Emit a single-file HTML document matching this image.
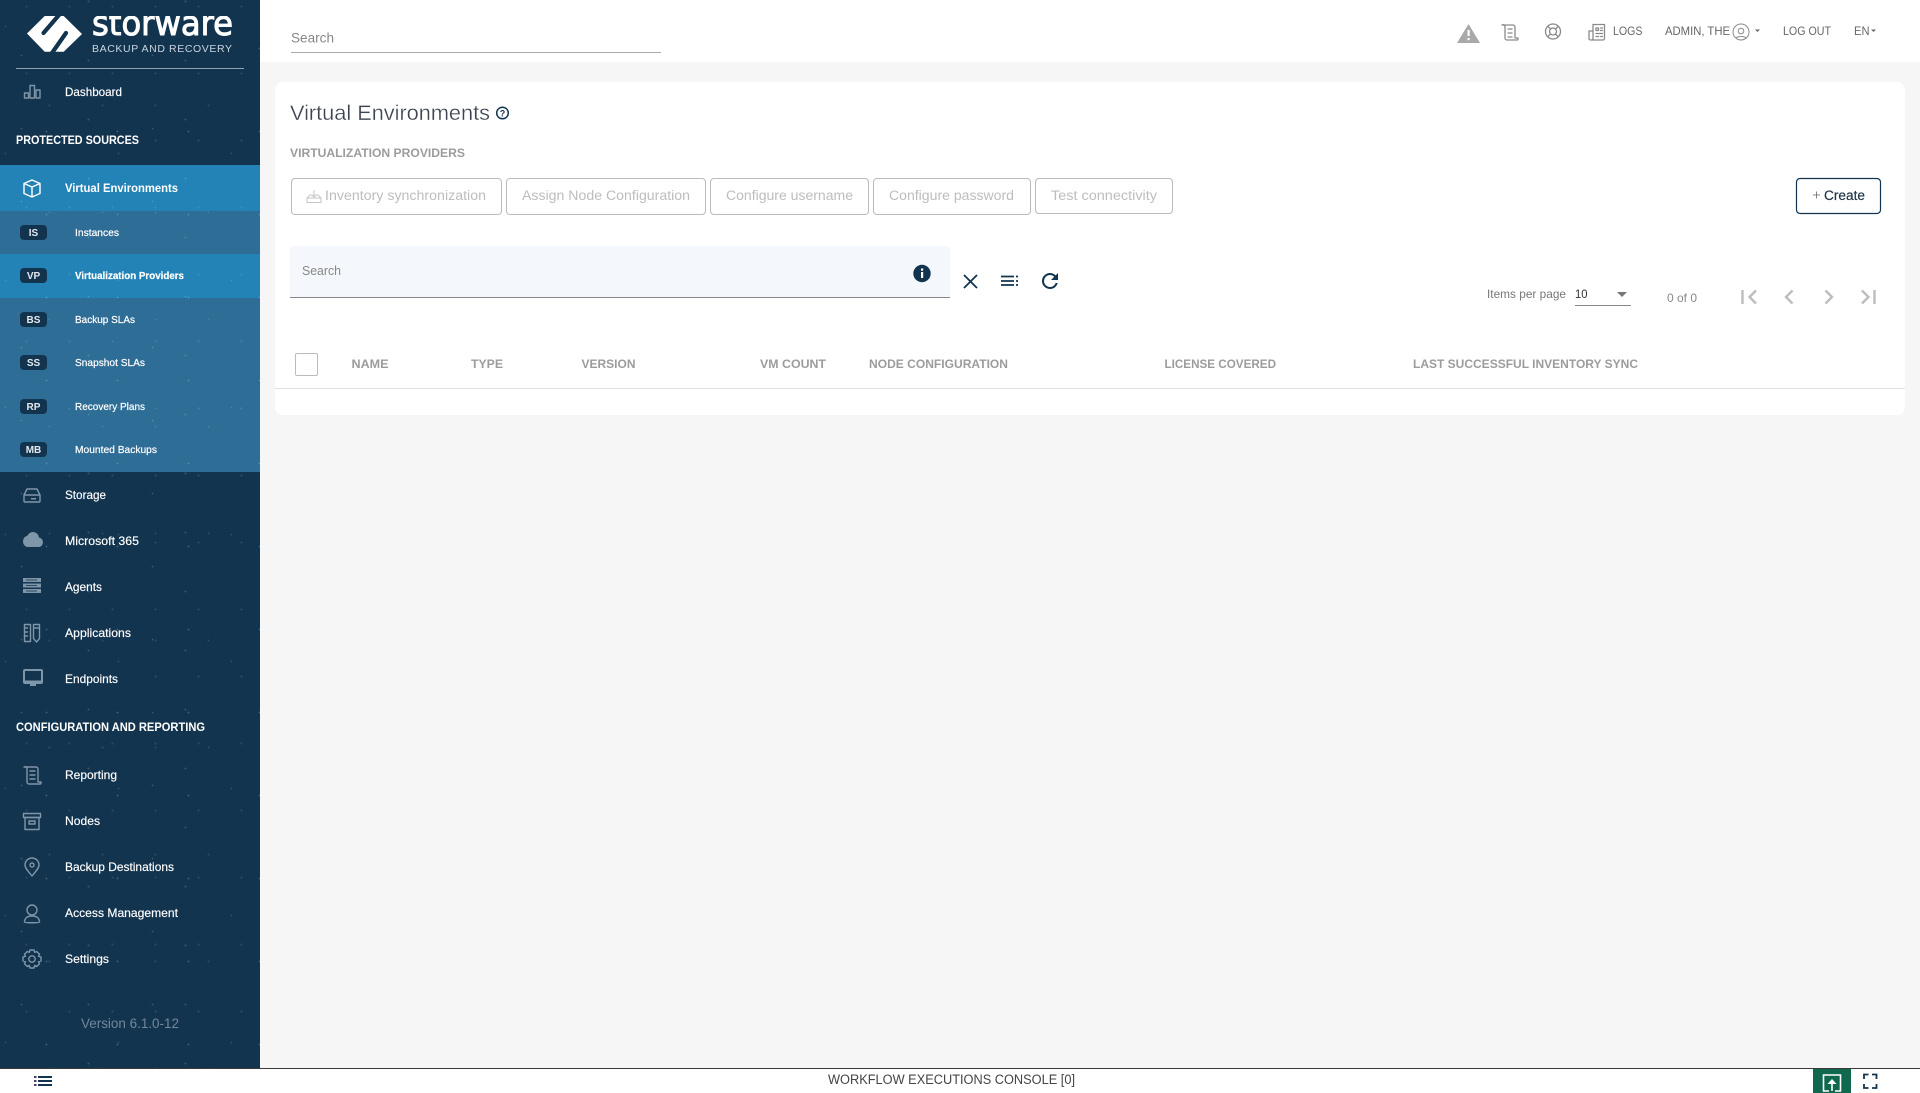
<!DOCTYPE html>
<html><head><meta charset="utf-8"><title>Virtual Environments</title>
<style>
html,body{margin:0;padding:0;width:1920px;height:1093px;overflow:hidden;background:#f6f6f6;font-family:"Liberation Sans",sans-serif}
div{position:absolute}
#side{left:0;top:0;width:260px;height:1068px;background:#13344f}
#stars{left:0;top:0;width:260px;height:1068px;background-image:
radial-gradient(circle,rgba(255,255,255,.22) .6px,transparent 1.1px),
radial-gradient(circle,rgba(255,255,255,.16) .7px,transparent 1.2px),
radial-gradient(circle,rgba(255,255,255,.12) .7px,transparent 1.2px),
radial-gradient(circle,rgba(255,255,255,.18) .6px,transparent 1.1px),
radial-gradient(circle,rgba(255,255,255,.1) .8px,transparent 1.3px),
radial-gradient(circle,rgba(255,255,255,.14) .6px,transparent 1.1px);
background-size:71px 83px,97px 59px,53px 107px,131px 73px,43px 67px,113px 127px;
background-position:11px 7px,40px 31px,23px 52px,87px 19px,5px 40px,62px 90px}
#top{left:260px;top:0;width:1660px;height:62px;background:#fff}
#card{left:275px;top:82px;width:1630px;height:333px;background:#fff;border-radius:8px}
#foot{left:0;top:1068px;width:1920px;height:25px;background:#fff;border-top:1.5px solid #3a3a3a;box-sizing:border-box}
svg{position:absolute;left:0;top:0}
text{font-family:"Liberation Sans",sans-serif;white-space:pre}
.n{font-size:12px;fill:#fff;stroke:#fff;stroke-width:.15}
.h{font-size:12px;font-weight:bold;fill:#fff}
.s{font-size:10.5px;fill:#fff;stroke:#fff;stroke-width:.2}
.b{font-size:10px;font-weight:bold;fill:#e4e9ee;text-anchor:middle}
.i{fill:none;stroke:#7f95a8;stroke-width:1.4;stroke-linejoin:round;stroke-linecap:round}
.f{fill:#7f95a8}
.t{fill:none;stroke:#8a8a8a;stroke-width:1.3;stroke-linejoin:round;stroke-linecap:round}
.tt{font-size:12px;fill:#666}
.bt{font-size:13.5px;fill:#bdbdbd}
.th{font-size:12px;font-weight:bold;fill:#9c9c9c}
.d{fill:none;stroke:#13344f;stroke-width:1.8;stroke-linecap:butt}
.p{fill:none;stroke:#bdbdbd;stroke-width:2.4}
.bx{fill:#fff;stroke:#bbb;stroke-width:1}
</style></head><body>
<div id="side"></div>
<div style="left:0;top:165px;width:260px;height:46px;background:#2383b6"></div>
<div style="left:0;top:211px;width:260px;height:43px;background:#2e6d96"></div>
<div style="left:0;top:254px;width:260px;height:44px;background:#2383b6"></div>
<div style="left:0;top:298px;width:260px;height:174px;background:#2e6d96"></div>
<div id="stars"></div>
<div id="top"></div>
<div id="card"></div>
<div id="foot"></div>
<div style="left:290px;top:246px;width:660px;height:52px;background:#f4f7fb;border-bottom:1px solid #888;border-radius:4px 4px 0 0;box-sizing:border-box"></div>
<div style="left:1813px;top:1069px;width:38px;height:24px;background:#10694f"></div>
<svg width="1920" height="1093" viewBox="0 0 1920 1093">
<defs><clipPath id="wm"><rect x="90" y="16" width="150" height="20"/></clipPath></defs>
<!-- logo -->
<polygon points="27,33.5 44.7,16 63.7,16 82,34 63.7,51.7 44.7,51.7" fill="#fff"/>
<path d="M59,15 L43.5,33" stroke="#13344f" stroke-width="4.2" fill="none" stroke-linecap="round"/>
<path d="M52,53 L66,33" stroke="#13344f" stroke-width="4.2" fill="none" stroke-linecap="round"/>
<g clip-path="url(#wm)"><text x="92" y="35" font-size="34" style="font-family:'DejaVu Sans',sans-serif" fill="#fff" stroke="#fff" stroke-width="1" textLength="141" lengthAdjust="spacingAndGlyphs">storware</text></g>
<text x="92" y="52" font-size="10.5" fill="#c9d3dd" textLength="140">BACKUP AND RECOVERY</text>
<rect x="16" y="68" width="228" height="1" fill="#8fa3b6"/>
<!-- nav text -->
<text class="n" x="65" y="96" textLength="57" lengthAdjust="spacingAndGlyphs">Dashboard</text>
<text class="h" x="16" y="144" textLength="123" lengthAdjust="spacingAndGlyphs">PROTECTED SOURCES</text>
<text class="h" x="65" y="192" textLength="113" lengthAdjust="spacingAndGlyphs">Virtual Environments</text>
<rect x="20" y="225" width="27" height="15" rx="4" fill="#13344f"/><text class="b" x="33.5" y="236">IS</text>
<rect x="20" y="268" width="27" height="15" rx="4" fill="#13344f"/><text class="b" x="33.5" y="279">VP</text>
<rect x="20" y="312" width="27" height="15" rx="4" fill="#13344f"/><text class="b" x="33.5" y="323">BS</text>
<rect x="20" y="355" width="27" height="15" rx="4" fill="#13344f"/><text class="b" x="33.5" y="366">SS</text>
<rect x="20" y="399" width="27" height="15" rx="4" fill="#13344f"/><text class="b" x="33.5" y="410">RP</text>
<rect x="20" y="442" width="27" height="15" rx="4" fill="#13344f"/><text class="b" x="33.5" y="453">MB</text>
<text class="s" x="75" y="236" textLength="44" lengthAdjust="spacingAndGlyphs">Instances</text>
<text class="s" x="75" y="279" font-weight="bold" textLength="109" lengthAdjust="spacingAndGlyphs">Virtualization Providers</text>
<text class="s" x="75" y="323" textLength="60" lengthAdjust="spacingAndGlyphs">Backup SLAs</text>
<text class="s" x="75" y="366" textLength="70" lengthAdjust="spacingAndGlyphs">Snapshot SLAs</text>
<text class="s" x="75" y="410" textLength="70" lengthAdjust="spacingAndGlyphs">Recovery Plans</text>
<text class="s" x="75" y="453" textLength="82" lengthAdjust="spacingAndGlyphs">Mounted Backups</text>
<text class="n" x="65" y="499" textLength="41" lengthAdjust="spacingAndGlyphs">Storage</text>
<text class="n" x="65" y="545" textLength="74" lengthAdjust="spacingAndGlyphs">Microsoft 365</text>
<text class="n" x="65" y="591" textLength="37" lengthAdjust="spacingAndGlyphs">Agents</text>
<text class="n" x="65" y="637" textLength="66" lengthAdjust="spacingAndGlyphs">Applications</text>
<text class="n" x="65" y="683" textLength="53" lengthAdjust="spacingAndGlyphs">Endpoints</text>
<text class="h" x="16" y="731" textLength="189" lengthAdjust="spacingAndGlyphs">CONFIGURATION AND REPORTING</text>
<text class="n" x="65" y="779" textLength="52" lengthAdjust="spacingAndGlyphs">Reporting</text>
<text class="n" x="65" y="825" textLength="35" lengthAdjust="spacingAndGlyphs">Nodes</text>
<text class="n" x="65" y="871" textLength="109" lengthAdjust="spacingAndGlyphs">Backup Destinations</text>
<text class="n" x="65" y="917" textLength="113" lengthAdjust="spacingAndGlyphs">Access Management</text>
<text class="n" x="65" y="963" textLength="44" lengthAdjust="spacingAndGlyphs">Settings</text>
<text x="81" y="1028" font-size="13.5" fill="#71879c" textLength="98" lengthAdjust="spacingAndGlyphs">Version 6.1.0-12</text>
<!-- nav icons -->
<g class="i"><rect x="24.5" y="93" width="4" height="5"/><rect x="30" y="85.5" width="4.5" height="12.5"/><rect x="36" y="90" width="4" height="8"/></g>
<g class="i" style="stroke:#fff"><path d="M32 180l8 3.5v10L32 197l-8-3.5v-10zM24 183.5l8 3.5 8-3.5M32 187v10"/></g>
<g class="i"><path d="M24 501v-6l3-6h10l3 6v6a1 1 0 0 1-1 1H25a1 1 0 0 1-1-1zM24 495h15"/></g>
<rect class="f" x="31" y="498" width="5" height="1.5"/>
<path class="f" transform="translate(23 528.2) scale(.83 .94)" d="M19.35 10.04A7.49 7.49 0 0 0 12 4C9.11 4 6.6 5.64 5.35 8.04A5.994 5.994 0 0 0 0 14c0 3.31 2.69 6 6 6h13c2.76 0 5-2.24 5-5 0-2.64-2.05-4.78-4.65-4.96z"/>
<g class="f"><rect x="23" y="578" width="18" height="4"/><rect x="23" y="583.5" width="18" height="4"/><rect x="23" y="589" width="18" height="4"/></g>
<g stroke="#13344f" stroke-width=".8"><path d="M26 580h11M26 585.5h11M26 591h11"/></g>
<g class="i"><rect x="24.5" y="624.5" width="6" height="17"/><path d="M24.5 628h3M24.5 632h3M24.5 636h3M33.5 624.5h6v14l-3 3.5-3-3.5zM33.5 628h6"/></g>
<path class="f" d="M25 669h16a2 2 0 0 1 2 2v11a2 2 0 0 1-2 2h-5v2h-6v-2h-5a2 2 0 0 1-2-2v-11a2 2 0 0 1 2-2z"/><rect x="25" y="671" width="16" height="9.5" fill="#13344f"/>
<g class="i"><path d="M24 767h12a2 2 0 0 1 2 2v13h3v1a1 1 0 0 1-1 1H29a2 2 0 0 1-2-2V769a2 2 0 0 0-3-2zM30 771h5M30 775h5M30 779h5"/></g>
<g class="i"><rect x="23.5" y="813.5" width="17" height="4"/><rect x="25" y="817.5" width="14" height="12"/><rect x="29" y="821" width="6" height="3"/></g>
<g class="i"><path d="M32 876c-4-5-7-8-7-11a7 7 0 0 1 14 0c0 3-3 6-7 11z"/><circle cx="32" cy="865" r="2"/></g>
<g class="i"><circle cx="32" cy="910" r="5"/><path d="M24.5 922c0-4 3-6 7.5-6s7.5 2 7.5 6c0 1-15 1-15 0z"/></g>
<g class="i"><circle cx="32" cy="959" r="3.2"/><path d="M30 950h4l.7 2.4 2-.9 2.8 2.8-1 2 2.5.7v4l-2.5.7 1 2-2.8 2.8-2-1-.7 2.5h-4l-.7-2.5-2 1-2.8-2.8 1-2-2.5-.7v-4l2.5-.7-1-2 2.8-2.8 2 .9z"/></g>
<!-- top bar -->
<text x="291" y="42.5" font-size="13.5" fill="#888" textLength="43" lengthAdjust="spacingAndGlyphs">Search</text>
<rect x="291" y="52" width="370" height="1" fill="#aaa"/>
<path d="M1468.5 24l11.5 19h-23z" fill="#a9a9a9"/><rect x="1467.5" y="30" width="2.2" height="6" fill="#fff"/><rect x="1467.5" y="38" width="2.2" height="2.2" fill="#fff"/>
<g class="t" transform="translate(-1 0)"><path d="M1503 25h11a2 2 0 0 1 2 2v11h3v1a1 1 0 0 1-1 1h-10a2 2 0 0 1-2-2V27a2 2 0 0 0-3-2zM1509 29h4M1509 33h4M1509 37h4"/></g>
<g class="t"><circle cx="1553" cy="31.5" r="7.5"/><circle cx="1553" cy="31.5" r="3.5"/><path d="M1548 26.5l2.5 2.5M1558 26.5l-2.5 2.5M1548 36.5l2.5-2.5M1558 36.5l-2.5-2.5"/></g>
<g class="t"><path d="M1593 24.5h11.5v14a1.5 1.5 0 0 1-1.5 1.5h-12.5a1.5 1.5 0 0 1-1.5-1.500V31h4zM1593 31v7.500a1.500 1.500 0 0 1-1.500 1.500M1596 28h2.500v2.500h-2.500zM1600.500 28h2M1600.500 30.500h2M1596 33.500h6.500M1596 36.500h2.500M1600.500 36.500h2"/></g>
<text class="tt" x="1613" y="35" textLength="29.5" lengthAdjust="spacingAndGlyphs">LOGS</text>
<text class="tt" x="1665" y="35" textLength="65" lengthAdjust="spacingAndGlyphs">ADMIN, THE</text>
<g class="t" style="stroke-width:1"><circle cx="1741" cy="32" r="8"/><circle cx="1741" cy="31" r="2.8"/><path d="M1736 38c2-2 8-2 10 0"/></g>
<path d="M1755 29.5h5l-2.5 2.5z" fill="#666"/>
<text class="tt" x="1783" y="35" textLength="48" lengthAdjust="spacingAndGlyphs">LOG OUT</text>
<text class="tt" x="1854" y="35" textLength="15.5" lengthAdjust="spacingAndGlyphs">EN</text>
<path d="M1871 29.5h5l-2.5 2.5z" fill="#666"/>
<!-- heading -->
<text x="290" y="120" font-size="21.5" fill="#3c4450" stroke="#fff" stroke-width=".3" textLength="200" lengthAdjust="spacingAndGlyphs">Virtual Environments</text>
<circle cx="502.5" cy="113" r="5.8" fill="none" stroke="#13344f" stroke-width="1.5"/>
<text x="502.5" y="116.5" font-size="9" font-weight="bold" fill="#13344f" text-anchor="middle">?</text>
<text class="th" x="290" y="157" textLength="175" lengthAdjust="spacingAndGlyphs">VIRTUALIZATION PROVIDERS</text>
<!-- buttons -->
<rect class="bx" x="291.5" y="178.5" width="210" height="36" rx="3.5"/>
<rect class="bx" x="506.5" y="178.5" width="199" height="36" rx="3.5"/>
<rect class="bx" x="710.5" y="178.5" width="158" height="36" rx="3.5"/>
<rect class="bx" x="873.5" y="178.5" width="157" height="36" rx="3.5"/>
<rect class="bx" x="1035.5" y="178.5" width="137" height="35" rx="3.5"/>
<g fill="none" stroke="#c6c6c6" stroke-width="1"><path d="M307 198l3-3h2.5M321 198l-3-3h-2.5M307 198v4.5h14V198zM314 190v7M312 195l2 2 2-2"/></g>
<text class="bt" x="325" y="200" textLength="161" lengthAdjust="spacingAndGlyphs">Inventory synchronization</text>
<text class="bt" x="522" y="200" textLength="168" lengthAdjust="spacingAndGlyphs">Assign Node Configuration</text>
<text class="bt" x="726" y="200" textLength="127" lengthAdjust="spacingAndGlyphs">Configure username</text>
<text class="bt" x="889" y="200" textLength="125" lengthAdjust="spacingAndGlyphs">Configure password</text>
<text class="bt" x="1051" y="200" textLength="106" lengthAdjust="spacingAndGlyphs">Test connectivity</text>
<rect x="1796.5" y="178.5" width="84" height="35" rx="3.5" fill="#fff" stroke="#13344f" stroke-width="1.2"/>
<path d="M1813 195h7M1816.5 191.5v7" stroke="#666" stroke-width=".8"/>
<text x="1824" y="200" font-size="13.5" fill="#1e3448" stroke="#1e3448" stroke-width=".2" textLength="41" lengthAdjust="spacingAndGlyphs">Create</text>
<!-- search -->
<text x="302" y="275" font-size="12.5" fill="#888" textLength="39" lengthAdjust="spacingAndGlyphs">Search</text>
<circle cx="922" cy="273.5" r="8.7" fill="#13344f"/><rect x="921" y="272" width="2.2" height="6" fill="#fff"/><rect x="921" y="268.5" width="2.2" height="2.2" fill="#fff"/>
<path class="d" d="M964 275l13 13M977 275l-13 13"/>
<path class="d" d="M1001 276.5h13M1001 281h13M1001 285h13M1016 276.5h2M1016 281h2M1016 285h2"/>
<path transform="translate(1038 269)" fill="#13344f" d="M17.65 6.35A8 8 0 1 0 19.73 14h-2.08A6 6 0 1 1 12 6c1.66 0 3.14.69 4.22 1.78L13 11h7V4z"/>
<!-- paginator -->
<text x="1487" y="298" font-size="12" fill="#777" textLength="79" lengthAdjust="spacingAndGlyphs">Items per page</text>
<text x="1575" y="298" font-size="12" fill="#333" textLength="12.5" lengthAdjust="spacingAndGlyphs">10</text>
<rect x="1575" y="305" width="56" height="1" fill="#888"/>
<path d="M1617 292h10l-5 5z" fill="#777"/>
<text x="1667" y="302" font-size="12" fill="#888" textLength="30" lengthAdjust="spacingAndGlyphs">0 of 0</text>
<path class="p" d="M1742.5 290v14M1756 290.5l-6.500 6.500 6.500 6.500M1792.500 290.500l-6.500 6.500 6.500 6.500M1825.500 290.500l6.500 6.500-6.500 6.500M1862 290.500l6.500 6.500-6.500 6.500M1874.500 290v14"/>
<!-- table -->
<rect x="295.5" y="353.5" width="22" height="22" rx="1.5" fill="#fff" stroke="#bbb"/>
<text class="th" x="351.5" y="368" textLength="37" lengthAdjust="spacingAndGlyphs">NAME</text>
<text class="th" x="471" y="368" textLength="32" lengthAdjust="spacingAndGlyphs">TYPE</text>
<text class="th" x="581.5" y="368" textLength="54" lengthAdjust="spacingAndGlyphs">VERSION</text>
<text class="th" x="760" y="368" textLength="66" lengthAdjust="spacingAndGlyphs">VM COUNT</text>
<text class="th" x="869" y="368" textLength="139" lengthAdjust="spacingAndGlyphs">NODE CONFIGURATION</text>
<text class="th" x="1164.5" y="368" textLength="111.5" lengthAdjust="spacingAndGlyphs">LICENSE COVERED</text>
<text class="th" x="1413" y="368" textLength="225" lengthAdjust="spacingAndGlyphs">LAST SUCCESSFUL INVENTORY SYNC</text>
<rect x="275" y="388" width="1630" height="1" fill="#e0e0e0"/>
<!-- footer -->
<path d="M34 1077h2.5M34 1081h2.5M34 1085h2.5" stroke="#4a3f6b" stroke-width="2"/>
<path d="M38 1077h14M38 1081h14M38 1085h14" stroke="#13344f" stroke-width="2"/>
<text x="828" y="1084" font-size="13.5" fill="#444" textLength="247" lengthAdjust="spacingAndGlyphs">WORKFLOW EXECUTIONS CONSOLE [0]</text>
<g fill="none" stroke="#fff" stroke-width="1.6"><path d="M1829 1091h-5.5v-16h17v16h-5.5"/><path d="M1832 1091v-9"/></g><path d="M1827.5 1084l4.5-5 4.500 5z" fill="#fff"/>
<path d="M1864 1079v-4.5h4.5M1872 1074.5h4.5v4.5M1876.5 1084v4h-4.5M1868.5 1088h-4.500v-4" fill="none" stroke="#13344f" stroke-width="1.8"/>
</svg>
</body></html>
